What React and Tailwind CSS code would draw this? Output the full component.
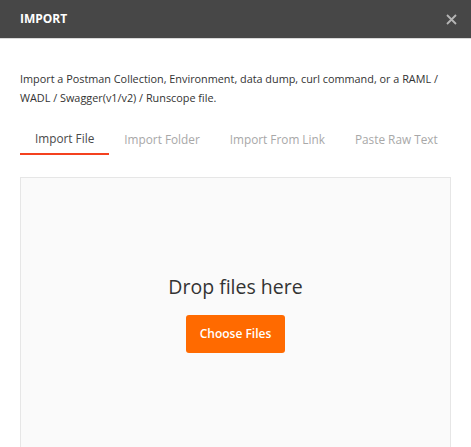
const tabs = ["Import File", "Import Folder", "Import From Link", "Paste Raw Text"];

export default function App() {
  return (
    <div className="w-[471px] h-[447px] overflow-hidden bg-white font-['Open_Sans',sans-serif]">
      <div className="h-[39px] bg-[#474747] border-b border-[#d8d8d8] flex items-center justify-between pl-[20px] pr-[14px]">
        <span className="text-white text-[12px] font-bold">IMPORT</span>
        <svg width="11" height="11" viewBox="0 0 11 11" className="mt-[1px]">
          <path d="M1 1L10 10M10 1L1 10" stroke="#b5b5b5" strokeWidth="1.8" />
        </svg>
      </div>

      <p className="px-[20px] pt-[30px] text-[10.85px] leading-[19px] text-[#333]">
        Import a Postman Collection, Environment, data dump, curl command, or a RAML / WADL / Swagger(v1/v2) / Runscope file.
      </p>

      <div className="flex mt-[18px] mx-[20px]">
        {tabs.map((t, i) => (
          <div
            key={t}
            className={`h-[30px] flex items-center whitespace-nowrap px-[15px] text-[11.8px] ${
              i === 0 ? "border-b-2 border-[#f4411f] text-[#4a4a4a]" : "text-[#a8a8a8]"
            }`}
          >
            {t}
          </div>
        ))}
      </div>

      <div className="mx-[20px] mt-[22px] h-[300px] bg-[#fafafa] border border-[#e6e6e6] flex flex-col items-center pt-[96px]">
        <div className="text-[19.5px] text-[#333] leading-[26px]">Drop files here</div>
        <button className="mt-[15px] w-[99px] h-[38px] rounded-[3px] bg-[#ff6a00] text-white text-[12px] font-semibold">
          Choose Files
        </button>
      </div>
    </div>
  );
}
